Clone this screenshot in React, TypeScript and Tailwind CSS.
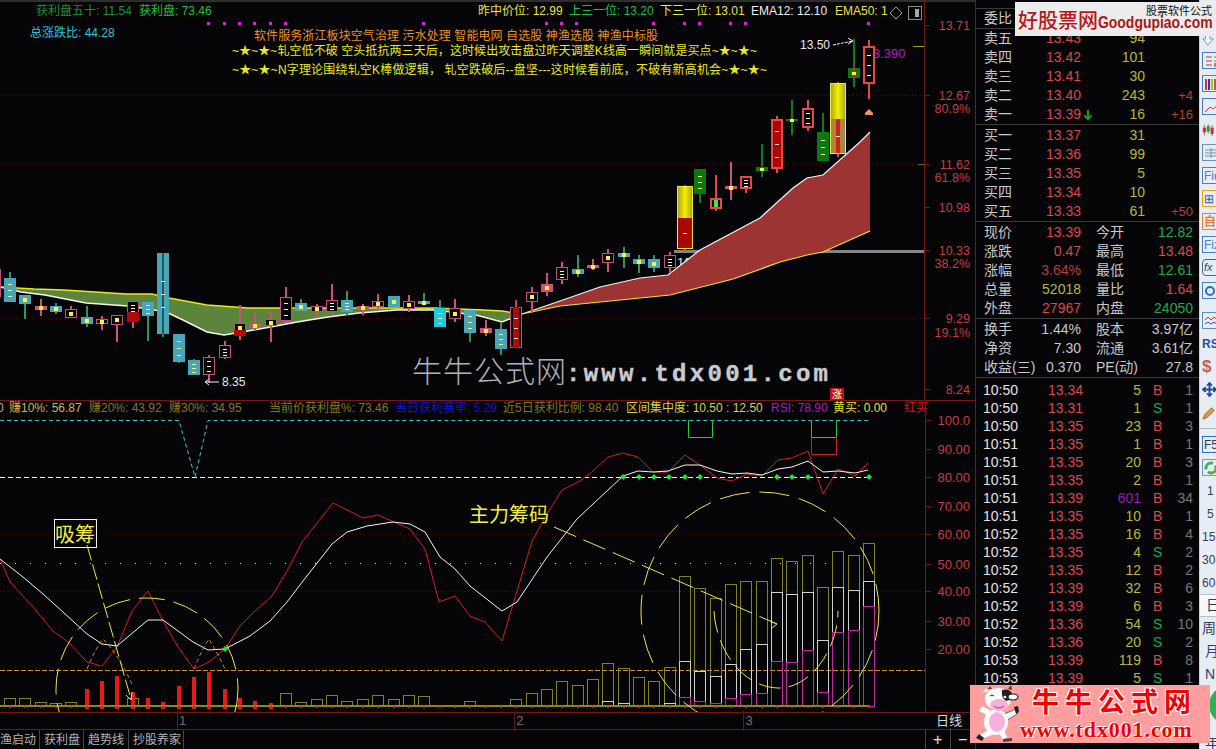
import React from "react";
import { Move } from "lucide-react";

type K = "teal" | "bright" | "hollow" | "red" | "redHollow" | "redHollow2" | "green" | "cross" | "gcross" | "pair";
const X = (i: number) => Math.round(10 + 15.34 * i);
// i, hi, top, bot, lo, kind
const candles: [number, number, number, number, number, K][] = [
  [-1, 269, 269, 297, 297, "hollow"],
  [0, 272, 278, 302, 302, "teal"],
  [1, 295, 295, 304, 319, "teal"],
  [2, 299, 306, 310, 316, "cross"],
  [3, 303, 306, 312, 314, "teal"],
  [4, 306, 309, 318, 318, "hollow"],
  [5, 306, 317, 324, 327, "teal"],
  [6, 316, 319, 324, 330, "hollow"],
  [7, 315, 315, 325, 342, "hollow"],
  [8, 301, 301, 322, 328, "pair"],
  [9, 299, 302, 316, 341, "teal"],
  [10, 253, 253, 334, 337, "teal"],
  [11, 334, 334, 362, 363, "teal"],
  [12, 359, 360, 375, 375, "teal"],
  [13, 355, 357, 375, 383, "hollow"],
  [14, 341, 345, 358, 359, "hollow"],
  [15, 305, 323, 336, 340, "pair"],
  [16, 313, 324, 328, 330, "cross"],
  [17, 311, 319, 326, 342, "hollow"],
  [18, 287, 297, 321, 323, "hollow"],
  [19, 299, 303, 311, 313, "teal"],
  [20, 304, 306, 312, 317, "hollow"],
  [21, 284, 300, 312, 314, "hollow"],
  [22, 291, 300, 312, 315, "teal"],
  [23, 304, 306, 309, 315, "cross"],
  [24, 294, 301, 307, 310, "hollow"],
  [25, 296, 296, 307, 307, "teal"],
  [26, 295, 301, 309, 312, "hollow"],
  [27, 293, 301, 304, 305, "teal"],
  [28, 300, 308, 327, 327, "bright"],
  [29, 299, 308, 319, 322, "hollow"],
  [30, 310, 310, 333, 342, "teal"],
  [31, 320, 328, 333, 336, "cross"],
  [32, 322, 329, 349, 355, "teal"],
  [33, 300, 307, 348, 348, "redHollow"],
  [34, 287, 292, 302, 313, "hollow"],
  [35, 273, 284, 292, 296, "cross"],
  [36, 262, 267, 280, 284, "hollow"],
  [37, 255, 269, 274, 277, "teal"],
  [38, 259, 265, 268, 270, "cross"],
  [39, 249, 253, 263, 272, "hollow"],
  [40, 247, 253, 257, 268, "teal"],
  [41, 255, 259, 264, 273, "teal"],
  [42, 255, 259, 268, 272, "teal"],
  [43, 252, 255, 268, 273, "hollow"],
  [45, 169, 169, 194, 203, "green"],
  [47, 162, 186, 189, 200, "cross"],
  [48, 176, 176, 189, 193, "redHollow2"],
  [49, 144, 167, 171, 177, "gcross"],
  [50, 116, 119, 169, 173, "red"],
  [51, 100, 119, 121, 135, "gcross"],
  [52, 100, 108, 128, 131, "redHollow2"],
  [53, 113, 132, 161, 161, "green"],
  [55, 39, 68, 78, 87, "gcross"],
  [56, 40, 46, 84, 99, "redHollow2"],
];

const marks = (x: number, t: number, b: number, color = "#f4f48a") => {
  const h = b - t;
  if (h < 12) return <rect x={x - 2} y={Math.round((t + b) / 2) - 2} width={4} height={4} fill="#f2f24a" />;
  const c = Math.round((t + b) / 2);
  const s = Math.round(Math.min(h / 4, 13));
  return (
    <g fill={color}>
      <rect x={x - 2} y={c - s} width={4} height={1} />
      <rect x={x - 2} y={c} width={4} height={1} />
      <rect x={x - 2} y={c + s} width={4} height={1} />
    </g>
  );
};

function Candle({ c }: { c: (typeof candles)[number] }) {
  const [i, hi, t, b, lo, kind] = c;
  const x = X(i);
  const k = kind as string;
  const w = 12;
  const l = x - w / 2;
  if (k === "teal" || k === "bright") {
    return (
      <g>
        <line x1={x} x2={x} y1={hi} y2={lo} stroke="#2f9460" strokeWidth={2} />
        <rect x={l} y={t} width={w} height={b - t} fill={k === "bright" ? "#25c8d8" : "#48a6b8"} />
        {i === 10 ? <rect x={x - 1} y={t} width={2} height={b - t} fill="#1f5a5a" /> : null}
        {marks(x, t, b)}
      </g>
    );
  }
  if (k === "hollow" || k === "cross") {
    const stroke = "#c04f7c";
    return (
      <g>
        <line x1={x} x2={x} y1={hi} y2={lo} stroke="#d05078" strokeWidth={2} />
        {k === "cross" ? (
          <rect x={l} y={t} width={w} height={Math.max(b - t, 3)} fill="#d05078" />
        ) : (
          <rect x={l + 0.5} y={t + 0.5} width={w - 1} height={b - t - 1} fill="#050508" stroke={stroke} />
        )}
        {marks(x, t, b, "#f6f6c8")}
      </g>
    );
  }
  if (k === "pair") {
    const mid = Math.round((t + b) / 2);
    return (
      <g>
        <line x1={x} x2={x} y1={hi} y2={lo} stroke="#d05078" strokeWidth={2} />
        <rect x={l + 0.5} y={t + 0.5} width={w - 1} height={mid - t} fill="#050508" stroke="#c04f7c" />
        <rect x={l} y={mid} width={w} height={b - mid} fill="#b40808" />
        {marks(x, t, mid + 2, "#f6f6c8")}
      </g>
    );
  }
  if (k === "redHollow") {
    return (
      <g>
        <line x1={x} x2={x} y1={hi} y2={lo} stroke="#d04060" strokeWidth={2} />
        <rect x={l + 0.5} y={t + 0.5} width={w - 1} height={b - t - 1} fill="#050508" stroke="#c04f7c" />
        <rect x={x - 3} y={t} width={6} height={b - t} fill="#b40808" />
        {marks(x, t, b, "#f0f0f0")}
      </g>
    );
  }
  if (k === "redHollow2") {
    return (
      <g>
        <line x1={x} x2={x} y1={hi} y2={lo} stroke="#e84848" strokeWidth={2} />
        <rect x={l + 1} y={t + 1} width={w - 2} height={b - t - 2} fill="#050508" stroke="#e84848" strokeWidth={2} />
        {marks(x, t, b, "#f6f6e0")}
      </g>
    );
  }
  if (k === "red") {
    return (
      <g>
        <line x1={x} x2={x} y1={hi} y2={lo} stroke="#e84848" strokeWidth={2} />
        <rect x={l + 1} y={t + 1} width={w - 2} height={b - t - 2} fill="#a80808" stroke="#e84848" strokeWidth={2} />
        {marks(x, t, b, "#f6f6e0")}
      </g>
    );
  }
  if (k === "green") {
    return (
      <g>
        <line x1={x} x2={x} y1={hi} y2={lo} stroke="#0f7a18" strokeWidth={2} />
        <rect x={l} y={t} width={w} height={b - t} fill="#0a7a10" />
        {marks(x, t, b)}
      </g>
    );
  }
  return (
    <g>
      <line x1={x} x2={x} y1={hi} y2={lo} stroke="#0f7a18" strokeWidth={2} />
      <rect x={l} y={t} width={w} height={b - t} fill="#0a7a10" />
      {i === 55 ? <rect x={x - 1.5} y={t} width={3} height={b - t} fill="#d02020" /> : null}
      <rect x={x - 2} y={Math.round((t + b) / 2) - 1} width={4} height={3} fill="#f0f060" />
    </g>
  );
}

function Gold({ i, top, mid, bot, tan }: { i: number; top: number; mid: number; bot: number; tan?: boolean }) {
  const x = X(i);
  return (
    <g>
      <line x1={x} x2={x} y1={top - 1} y2={bot + 4} stroke="#e84848" strokeWidth={2} />
      <rect x={x - 7} y={top} width={14} height={mid - top} fill="url(#goldY)" />
      <rect x={x - 7} y={mid} width={14} height={bot - mid} fill={tan ? "#a8883c" : "#a80808"} />
      {tan ? <rect x={x - 2} y={mid} width={4} height={bot - mid} fill="#d02010" /> : null}
      <rect x={x - 7.5} y={top + 0.5} width={15} height={bot - top} fill="none" stroke="#e8e840" />
      <rect x={x - 2} y={Math.round((mid + bot) / 2)} width={4} height={1} fill="#f0f0f0" />
    </g>
  );
}

const pts = (a: number[][]) => a.map((p) => p.join(",")).join(" ");
const yellowMA = [[0, 287], [34, 289], [64, 290], [95, 292], [126, 294], [152, 294], [169, 298], [207, 305], [248, 308], [310, 308], [397, 308], [434, 308], [483, 310], [502, 311], [522, 314]];
const whiteMA = [[0, 287], [21, 292], [45, 295], [86, 303], [128, 306], [148, 309], [166, 312], [183, 320], [207, 332], [224, 335], [248, 331], [276, 326], [297, 322], [328, 317], [359, 313], [397, 310], [434, 310], [476, 315], [502, 322], [522, 314]];
const whiteUp = [[522, 314], [560, 301], [600, 287], [640, 278], [668, 275], [700, 250], [760, 218], [793, 188], [807, 178], [823, 175], [860, 142], [870, 132]];
const yellowUp = [[870, 231], [823, 252], [807, 255], [780, 262], [733, 279], [670, 295], [640, 298], [560, 306], [522, 314]];

const redLine = [[0, 560], [10, 583], [33, 608], [53, 632], [68, 643], [87, 663], [102, 667], [117, 648], [132, 612], [148, 592], [163, 622], [178, 648], [194, 670], [209, 663], [225, 650], [240, 627], [255, 612], [272, 597], [287, 572], [302, 543], [318, 523], [333, 504], [363, 519], [378, 516], [410, 530], [425, 550], [439, 603], [455, 597], [470, 617], [485, 623], [502, 642], [517, 592], [532, 542], [547, 515], [562, 491], [580, 482], [593, 472], [608, 458], [623, 454], [638, 458], [653, 473], [668, 473], [685, 456], [700, 466], [717, 479], [732, 482], [747, 475], [762, 477], [778, 461], [792, 459], [808, 452], [823, 495], [838, 470], [855, 477], [868, 464]];
const whiteLine = [[0, 560], [23, 578], [43, 595], [63, 613], [87, 635], [102, 645], [117, 647], [148, 621], [163, 621], [193, 643], [208, 651], [225, 650], [250, 637], [270, 622], [287, 603], [303, 582], [332, 545], [347, 533], [367, 527], [393, 523], [410, 525], [425, 533], [440, 558], [455, 570], [470, 587], [502, 612], [517, 603], [547, 558], [577, 520], [593, 505], [623, 477], [638, 472], [653, 473], [668, 472], [685, 466], [700, 466], [717, 472], [732, 475], [747, 474], [762, 476], [778, 470], [792, 468], [808, 462], [823, 473], [838, 472], [855, 474], [868, 471]];

const olive: [number, number][] = [[0, 699], [1, 699], [2, 703], [3, 704], [4, 703], [8, 699], [18, 694], [19, 703], [20, 700], [21, 696], [22, 702], [23, 700], [24, 696], [25, 700], [26, 696], [27, 697], [30, 702], [33, 700], [34, 694], [35, 690], [36, 682], [37, 686], [38, 680], [39, 664], [40, 669], [41, 678], [42, 682], [43, 668], [44, 577], [45, 589], [46, 599], [47, 585], [48, 582], [49, 582], [50, 559], [51, 562], [52, 556], [53, 588], [54, 552], [55, 556], [56, 544]];
const whiteBars: [number, number][] = [[39, 702], [40, 704], [43, 704], [44, 662], [45, 672], [46, 677], [47, 665], [48, 650], [49, 645], [50, 593], [51, 595], [52, 593], [53, 641], [54, 588], [55, 591], [56, 582]];
const magBars: [number, number][] = [[44, 698], [45, 702], [46, 704], [47, 699], [48, 695], [49, 694], [50, 662], [51, 663], [52, 651], [53, 693], [54, 633], [55, 631], [56, 607]];
const redBars: [number, number][] = [[5, 690], [6, 682], [7, 677], [8, 693], [9, 699], [10, 703], [11, 687], [12, 678], [13, 673], [14, 690], [15, 699], [16, 702], [17, 704]];

const diamonds = [[623, 478], [639, 478], [654, 478], [669, 478], [685, 478], [700, 478], [777, 478], [792, 478], [808, 478], [869, 478], [225, 650]];
const purpleDots = [208, 224, 239, 254, 270, 285, 423, 546, 561, 576, 653, 684, 699, 730, 745, 868];
const axisTop: [string, number][] = [["13.71", 25], ["12.67", 95], ["80.9%", 108], ["11.62", 164], ["61.8%", 177], ["10.98", 207], ["10.33", 250], ["38.2%", 263], ["9.29", 318], ["19.1%", 332], ["8.24", 389]];
const axisLow: [string, number][] = [["100.0", 421], ["90.00", 450], ["80.00", 478], ["70.00", 507], ["60.00", 535], ["50.00", 565], ["40.00", 592], ["30.00", 622], ["20.00", 650]];

function T({ x, y, c, s = 12, w, children }: { x: number; y: number; c: string; s?: number; w?: number; children: React.ReactNode }) {
  return (
    <text x={x} y={y} fill={c} fontSize={s} textLength={w} lengthAdjust={w ? "spacing" : undefined}>
      {children}
    </text>
  );
}

function UpperChart() {
  return (
    <svg width={975} height={400} viewBox="0 0 975 400" className="block">
      <defs>
        <linearGradient id="goldY" x1="0" x2="1" y1="0" y2="0">
          <stop offset="0" stopColor="#b0a818" />
          <stop offset="0.5" stopColor="#f4f000" />
          <stop offset="1" stopColor="#b0a818" />
        </linearGradient>
      </defs>
      {[95, 164, 318].map((y) => (
        <line key={y} x1={0} x2={924} y1={y + 0.5} y2={y + 0.5} stroke="#4a1010" strokeDasharray="1 3" />
      ))}
      <rect x={674} y={250} width={250} height={3} fill="#858585" />
      <T x={677} y={267} c="#e8e8e8" s={13}>10</T>
      <polygon points={pts([...yellowMA, ...[...whiteMA].reverse()])} fill="#5c843a" />
      <polygon points={pts([...whiteUp, ...yellowUp])} fill="#9c3434" />
      <polyline points={pts(yellowMA)} fill="none" stroke="#e8e820" strokeWidth={1.5} />
      <polyline points={pts(whiteMA)} fill="none" stroke="#f4f4f4" strokeWidth={1.5} />
      <polyline points={pts(whiteUp)} fill="none" stroke="#f4f4f4" strokeWidth={1.2} />
      <polyline points={pts(yellowUp)} fill="none" stroke="#e8e820" strokeWidth={1.2} />
      <text x={873} y={58} fill="#b020c0" fontSize={13}>3.390</text>
      {candles.map((c) => (
        <Candle key={c[0]} c={c} />
      ))}
      <Gold i={44} top={186} mid={218} bot={248} />
      <Gold i={54} top={83} mid={119} bot={153} tan />
      {/* small candle with green core */}
      <line x1={716} x2={716} y1={175} y2={211} stroke="#e84848" strokeWidth={2} />
      <rect x={711} y={199} width={10} height={9} fill="#050508" stroke="#e84848" strokeWidth={2} />
      <rect x={714} y={200} width={4} height={7} fill="#50e040" />
      <polygon points="865,115 865,113 869,109 873,113 873,115" fill="#f09060" />

      <T x={36} y={15} c="#1f8f38">获利盘五十: 11.54</T>
      <T x={139} y={15} c="#22c030">获利盘: 73.46</T>
      <T x={478} y={15} c="#e4e44c">昨中价位: 12.99</T>
      <T x={569} y={15} c="#20c040">上三一位: 13.20</T>
      <T x={660} y={15} c="#e4e44c">下三一位: 13.01</T>
      <T x={751} y={15} c="#f0f0f0">EMA12: 12.10</T>
      <T x={835} y={15} c="#e4e44c">EMA50: 1</T>
      <polygon points="896,7 902,13 896,19 890,13" fill="none" stroke="#9a9a9a" />
      <rect x={908.5} y={6.5} width={13} height={13} fill="none" stroke="#8a8a8a" />
      <rect x={915} y={9} width={4} height={8} fill="#a8a8a8" />
      <T x={30} y={37} c="#25c8d8">总涨跌比: 44.28</T>
      {purpleDots.map((x) => (
        <rect key={x} x={x - 1} y={22} width={3} height={3} fill="#e020d8" />
      ))}
      <T x={254} y={40} c="#e8902a" w={404}>软件服务浙江板块空气治理 污水处理 智能电网 自选股 神渔选股 神渔中标股</T>
      <T x={232} y={55} c="#e8e820" w={525}>~★~★~轧空低不破 空头抵抗两三天后，这时候出攻击盘过昨天调整K线高一瞬间就是买点~★~★~</T>
      <T x={232} y={74} c="#e8e820" w={535}>~★~★~N字理论围绕轧空K棒做逻辑， 轧空跌破后--盘坚---这时候看前底，不破有新高机会~★~★~</T>

      <T x={800} y={49} c="#e8e8f0">13.50</T>
      <polyline points="833,45 853,41" fill="none" stroke="#f0f0f0" strokeDasharray="3 1" />
      <polyline points="848,38 853,41 848,44" fill="none" stroke="#f0f0f0" />
      <line x1={913} x2={924} y1={46.5} y2={46.5} stroke="#88a820" />
      <line x1={918} x2={924} y1={164.5} y2={164.5} stroke="#208040" />

      <polyline points="205,382 219,382" fill="none" stroke="#f0f0f0" />
      <polyline points="209,379 205,382 209,385" fill="none" stroke="#f0f0f0" />
      <T x={222} y={386} c="#e8e8e8">8.35</T>

      <text x={412} y={382} fill="#aeb2b8" fontSize={30} fontWeight={300} textLength={154} lengthAdjust="spacing">牛牛公式网</text>
      <text x={566} y={381} fill="#c8ccd0" stroke="#c8ccd0" strokeWidth={0.4} fontSize={24} fontWeight={700} textLength={262} lengthAdjust="spacing" style={{ fontFamily: "'Liberation Mono',monospace" }}>:www.tdx001.com</text>
      <rect x={830} y={388} width={14} height={12} fill="#b01818" />
      <T x={832} y={398} c="#ffffff" s={10}>涨</T>

      <line x1={924.5} x2={924.5} y1={0} y2={400} stroke="#7a1515" />
      {axisTop.filter((a) => !a[0].includes("%")).map(([, y]) => (
        <line key={y} x1={924} x2={930} y1={y + 0.5} y2={y + 0.5} stroke="#7a1515" />
      ))}
      {axisTop.map(([t, y]) => (
        <text key={t} x={970} y={y + 5} textAnchor="end" fill="#c83c3c" fontSize={12.5}>{t}</text>
      ))}
    </svg>
  );
}

function LowerChart() {
  return (
    <svg width={975} height={313} viewBox="0 401 975 313" className="block">
      <line x1={0} x2={975} y1={401.5} y2={401.5} stroke="#7a1515" />
      <T x={-3} y={413} c="#c8b850">0</T>
      <T x={9} y={413} c="#c8b850">赚10%: 56.87</T>
      <T x={89} y={413} c="#807820">赚20%: 43.92</T>
      <T x={169} y={413} c="#807820">赚30%: 34.95</T>
      <T x={269} y={413} c="#807820">当前价获利盘%: 73.46</T>
      <T x={395} y={413} c="#1414c8">当日获利赛率: 5.29</T>
      <T x={503} y={413} c="#807820">近5日获利比例: 98.40</T>
      <T x={626} y={413} c="#d8d040">区间集中度: 10.50 : 12.50</T>
      <T x={771} y={413} c="#a020c0">RSI: 78.90</T>
      <T x={833} y={413} c="#e0e040">黄买: 0.00</T>
      <T x={904} y={413} c="#c81818">红买</T>

      {[535, 592].map((y) => (
        <line key={y} x1={0} x2={925} y1={y + 0.5} y2={y + 0.5} stroke="#4a1010" strokeDasharray="1 3" />
      ))}
      <polyline points="0,421.5 179,421.5 195,478 208,421.5 870,421.5" fill="none" stroke="#40c8c8" strokeDasharray="4 3" />
      <line x1={0} x2={870} y1={478.5} y2={478.5} stroke="#f4f4f4" strokeDasharray="5 3" />
      <line x1={0} x2={830} y1={564.5} y2={564.5} stroke="#e0e0e0" strokeDasharray="1 14" />
      <line x1={0} x2={925} y1={671.5} y2={671.5} stroke="#c89028" strokeDasharray="5 2" />

      <polyline points="688.5,421 688.5,438.5 712.5,438.5 712.5,421" fill="none" stroke="#30c040" />
      <polyline points="811.5,421 811.5,438.5 836.5,438.5 836.5,421" fill="none" stroke="#30c040" />
      <polyline points="811.5,438 811.5,455.5 836.5,455.5 836.5,438" fill="none" stroke="#d02020" />

      {olive.map(([i, y]) => (
        <rect key={i} x={X(i) - 5.5} y={y + 0.5} width={11} height={707 - y} fill="none" stroke="#808028" />
      ))}
      {whiteBars.map(([i, y]) => (
        <rect key={i} x={X(i) - 5.5} y={y + 0.5} width={11} height={707 - y} fill="none" stroke="#d0d0d0" />
      ))}
      {magBars.map(([i, y]) => (
        <rect key={i} x={X(i) - 5.5} y={y + 0.5} width={11} height={707 - y} fill="none" stroke="#c028a0" />
      ))}
      {redBars.map(([i, y]) => (
        <rect key={i} x={X(i) - 2} y={y} width={4} height={710 - y} fill="#e81818" />
      ))}
      <line x1={0} x2={870} y1={707} y2={707} stroke="#8a8a10" strokeWidth={2} />
      {Array.from({ length: 57 }, (_, i) => (
        <rect key={i} x={X(i) - 1} y={707} width={2} height={2} fill="#d02020" />
      ))}

      <polyline points={pts(redLine)} fill="none" stroke="#d81c1c" />
      <polyline points={pts(whiteLine)} fill="none" stroke="#f4f4f4" />
      {diamonds.map(([x, y]) => (
        <polygon key={x} points={`${x},${y - 3} ${x + 3},${y} ${x},${y + 3} ${x - 3},${y}`} fill="#20e040" />
      ))}

      <circle cx={147} cy={690} r={91} fill="none" stroke="#e8e840" strokeDasharray="26 9" />
      <circle cx={760} cy={612} r={119} fill="none" stroke="#e8e840" strokeDasharray="30 10" />
      <path d="M714 612 C716 650 742 688 778 689 C810 690 838 650 838 612" fill="none" stroke="#e8e840" strokeDasharray="22 8" />
      <path d="M87 670 Q95 650 103 640 Q118 655 132 685" fill="none" stroke="#c89028" strokeDasharray="4 3" />
      <path d="M194 670 Q202 650 209 640 Q218 655 226 672" fill="none" stroke="#c89028" strokeDasharray="4 3" />
      <line x1={87} x2={131} y1={546} y2={700} stroke="#e8e840" strokeDasharray="16 4" />
      <polyline points="126,696 131,701 132,693" fill="none" stroke="#e8e840" />
      <line x1={554} x2={777} y1={528} y2={625} stroke="#e8e840" strokeDasharray="24 8" />
      <polyline points="770,622 777,625 772,629" fill="none" stroke="#e8e840" />

      <rect x={54.5} y={520.5} width={42} height={28} fill="#050508" fillOpacity={0.1} stroke="#f0f0f0" />
      <T x={55} y={543} c="#f0f040" s={20}>吸筹</T>
      <T x={469} y={523} c="#f0f040" s={20}>主力筹码</T>

      <line x1={925.5} x2={925.5} y1={401} y2={713} stroke="#7a1515" />
      {axisLow.map(([, y]) => (
        <line key={y} x1={925} x2={931} y1={y + 0.5} y2={y + 0.5} stroke="#7a1515" />
      ))}
      {axisLow.map(([t, y]) => (
        <text key={t} x={970} y={y + 5} textAnchor="end" fill="#c83c3c" fontSize={13}>{t}</text>
      ))}
      <line x1={0} x2={975} y1={713.5} y2={713.5} stroke="#7a1515" />
    </svg>
  );
}

const red = "text-[#d84a4a]";
const yel = "text-[#b8b838]";
const grn = "text-[#22a84c]";
const gry = "text-[#c8c8c8]";

function Book({ label, price, qty, diff, arrow }: { label: string; price: string; qty: string; diff?: string; arrow?: boolean }) {
  return (
    <div className="flex h-[19px] items-center pl-[8px]">
      <span className={`w-[50px] ${gry}`}>{label}</span>
      <span className={`w-[47px] text-right ${red}`}>{price}</span>
      <span className="w-[14px] pl-[2px]">
        {arrow ? (
          <svg width={10} height={12} viewBox="0 0 10 12">
            <path d="M5 1v9M1.5 6.5 5 10l3.5-3.5" stroke="#1a9a30" strokeWidth={2} fill="none" />
          </svg>
        ) : null}
      </span>
      <span className={`w-[50px] text-right ${yel}`}>{qty}</span>
      <span className={`w-[48px] text-right text-[13px] text-[#b83c3c]`}>{diff}</span>
    </div>
  );
}

function Stat({ a, av, ac, b, bv, bc }: { a: string; av: string; ac: string; b: string; bv: string; bc: string }) {
  return (
    <div className="flex h-[19px] items-center pl-[8px] whitespace-nowrap">
      <span className={`w-[50px] ${gry}`}>{a}</span>
      <span className={`w-[47px] text-right ${ac}`}>{av}</span>
      <span className={`ml-[15px] w-[40px] ${gry}`}>{b}</span>
      <span className={`w-[57px] text-right ${bc}`}>{bv}</span>
    </div>
  );
}

const ticks: [string, string, string, string, string][] = [
  ["10:50", "13.34", "5", "B", "1"], ["10:50", "13.31", "1", "S", "1"], ["10:50", "13.35", "23", "B", "3"], ["10:51", "13.35", "1", "B", "1"],
  ["10:51", "13.35", "20", "B", "3"], ["10:51", "13.35", "2", "B", "1"], ["10:51", "13.39", "601", "B", "34"], ["10:51", "13.35", "10", "B", "1"],
  ["10:52", "13.35", "16", "B", "4"], ["10:52", "13.35", "4", "S", "2"], ["10:52", "13.35", "12", "B", "2"], ["10:52", "13.39", "32", "B", "6"],
  ["10:52", "13.39", "6", "B", "3"], ["10:52", "13.36", "54", "S", "10"], ["10:52", "13.36", "20", "S", "2"], ["10:53", "13.39", "119", "B", "8"],
  ["10:53", "13.39", "5", "S", "1"],
];

function QuotePanel() {
  const hr = "h-px bg-[#3a3a3a]";
  return (
    <div className="w-[224px] h-[749px] border-l border-[#7a1515] text-[14px] overflow-hidden">
      <div className="h-[8px]" />
      <div className={hr} />
      <div className="flex h-[19px] items-center pl-[8px]"><span className={gry}>委比</span></div>
      <div className={hr} />
      <Book label="卖五" price="13.43" qty="94" />
      <Book label="卖四" price="13.42" qty="101" />
      <Book label="卖三" price="13.41" qty="30" />
      <Book label="卖二" price="13.40" qty="243" diff="+4" />
      <Book label="卖一" price="13.39" qty="16" diff="+16" arrow />
      <div className={`${hr} mb-[1px]`} />
      <Book label="买一" price="13.37" qty="31" />
      <Book label="买二" price="13.36" qty="99" />
      <Book label="买三" price="13.35" qty="5" />
      <Book label="买四" price="13.34" qty="10" />
      <Book label="买五" price="13.33" qty="61" diff="+50" />
      <div className={`${hr} mb-[1px]`} />
      <Stat a="现价" av="13.39" ac={red} b="今开" bv="12.82" bc={grn} />
      <Stat a="涨跌" av="0.47" ac={red} b="最高" bv="13.48" bc={red} />
      <Stat a="涨幅" av="3.64%" ac="text-[#b83c3c]" b="最低" bv="12.61" bc={grn} />
      <Stat a="总量" av="52018" ac={yel} b="量比" bv="1.64" bc={red} />
      <Stat a="外盘" av="27967" ac={red} b="内盘" bv="24050" bc={grn} />
      <div className={`${hr} mb-[1px]`} />
      <Stat a="换手" av="1.44%" ac={gry} b="股本" bv="3.97亿" bc={gry} />
      <Stat a="净资" av="7.30" ac={gry} b="流通" bv="3.61亿" bc={gry} />
      <Stat a="收益(三)" av="0.370" ac={gry} b="PE(动)" bv="27.8" bc={gry} />
      <div className={`${hr} mb-[3px]`} />
      {ticks.map((t, i) => (
        <div key={i} className="flex h-[18px] items-center pl-[7px]">
          <span className="w-[45px] text-[#e4e4e4]">{t[0]}</span>
          <span className={`w-[55px] text-right ${red}`}>{t[1]}</span>
          <span className={`w-[58px] text-right ${t[2] === "601" ? "text-[#9a1ca8]" : yel}`}>{t[2]}</span>
          <span className={`ml-[12px] w-[10px] ${t[3] === "B" ? "text-[#d84a4a]" : "text-[#22a84c]"}`}>{t[3]}</span>
          <span className="w-[30px] text-right text-[#787878]">{t[4]}</span>
        </div>
      ))}
    </div>
  );
}

const Box = ({ children, c = "#4a80c0" }: { children?: React.ReactNode; c?: string }) => (
  <span className="flex h-[17px] w-[26px] shrink-0 items-center overflow-hidden border pl-[1px] text-[12px] leading-none" style={{ borderColor: c, color: c }}>
    {children}
  </span>
);

function Tool({ children }: { children: React.ReactNode }) {
  return <div className="flex h-[23px] items-center pl-[2px]">{children}</div>;
}

function Toolbar() {
  const txt = "text-[12px] text-[#304060]";
  return (
    <div className="w-[17px] h-[749px] bg-[#e6edf4] overflow-hidden border-l border-[#c8d0d8] pt-[26px]">
      <Tool>
        <svg width={16} height={18} viewBox="0 0 16 18"><path d="M4 1h5v9h4l-6.5 7L1 10h3z" fill="#f4f8fc" stroke="#5a8ac0" /></svg>
      </Tool>
      <Tool>
        <Box>
          <svg width={22} height={14} viewBox="0 0 22 14"><path d="M2 3h6M2 7h6M2 11h6" stroke="#d03030" /><path d="M10 3h4M10 7h3" stroke="#30a040" /><rect x={10} y={9} width={4} height={4} fill="#909090" /></svg>
        </Box>
      </Tool>
      <Tool>
        <Box>
          <svg width={22} height={14} viewBox="0 0 22 14"><path d="M2 2v11" stroke="#d03030" strokeWidth={2} /><path d="M5 2v11" stroke="#3030d0" strokeWidth={2} /><path d="M8 2v11" stroke="#e0a020" strokeWidth={2} /><path d="M11 2v11" stroke="#30a040" strokeWidth={2} /><path d="M14 2v11" stroke="#d03030" strokeWidth={2} /></svg>
        </Box>
      </Tool>
      <Tool>
        <Box>
          <svg width={22} height={14} viewBox="0 0 22 14"><path d="M1 12l5-5 3 2 6-5" fill="none" stroke="#d03030" /></svg>
        </Box>
      </Tool>
      <Tool>
        <svg width={18} height={18} viewBox="0 0 18 18"><path d="M3 2v14" stroke="#d03030" /><rect x={1} y={6} width={4} height={6} fill="#d03030" /><path d="M8 1v13" stroke="#30a040" /><rect x={6} y={4} width={4} height={7} fill="#20a040" /><path d="M13 3v14" stroke="#d03030" /><rect x={11} y={6} width={4} height={8} fill="#d03030" /></svg>
      </Tool>
      <Tool>
        <Box c="#7090b8">
          <svg width={22} height={12} viewBox="0 0 22 12"><path d="M1 3h20M1 6h20M1 9h20M7 1v10M14 1v10" stroke="#7090b8" /></svg>
        </Box>
      </Tool>
      <Tool><Box>Fid</Box></Tool>
      <Tool>
        <Box c="#e0a020"><span className="text-[#3060a0]">⊞</span></Box>
      </Tool>
      <Tool><Box c="#e08030"><span className="font-bold">自</span></Box></Tool>
      <Tool><Box>Fiz</Box></Tool>
      <Tool>
        <span className="flex h-[17px] w-[26px] shrink-0 items-center rounded-[4px] border border-[#406890] pl-[1px] text-[11px] italic text-[#304868]">fx</span>
      </Tool>
      <Tool><Box c="#4a80c0"><span className="ml-[1px] inline-block h-[10px] w-[10px] rounded-full border-2 border-[#2a70b0]" /></Box></Tool>
      <div className="mt-[7px]" />
      <Tool>
        <Box c="#5a90c8">
          <svg width={22} height={12} viewBox="0 0 22 12"><path d="M1 5l3-3 3 3 3-3 3 3 3-3" fill="none" stroke="#d03030" /><path d="M1 9l3-2 3 2 3-2 3 2 3-2" fill="none" stroke="#3050c0" /></svg>
        </Box>
      </Tool>
      <Tool><span className="text-[12px] font-bold text-[#2850a0]">RS</span></Tool>
      <Tool><span className="text-[17px] font-bold text-[#c06060] leading-none">$</span></Tool>
      <Tool><Move size={15} className="text-[#1a4aa8] shrink-0" strokeWidth={3} /></Tool>
      <Tool>
        <svg width={16} height={16} viewBox="0 0 16 16"><path d="M1 15l2-5 8-8 3 3-8 8z" fill="#e0a040" stroke="#806030" /></svg>
      </Tool>
      <div className="mt-[4px] h-px bg-[#a8b0b8]" />
      <div className="mt-[4px]" />
      <Tool><Box c="#3070b8"><span className="text-[#303a50]">F5</span></Box></Tool>
      <Tool>
        <Box c="#60a0d0">
          <svg width={14} height={14} viewBox="0 0 14 14"><circle cx={7} cy={7} r={5} fill="none" stroke="#50b050" strokeWidth={3} strokeDasharray="11 3" /></svg>
        </Box>
      </Tool>
      {["1", "5", "15", "30", "60"].map((t) => (
        <Tool key={t}><span className={`${txt} whitespace-nowrap ${t.length === 1 ? "pl-[5px]" : ""}`}>{t}</span></Tool>
      ))}
      <div className="flex h-[23px] items-center border border-r-0 border-[#b8c0c8] bg-[#f6f8fa] pl-[6px] text-[14px] text-[#303a50] -ml-[1px]">日</div>
      {["周", "月", "N"].map((t) => (
        <Tool key={t}><span className={`${txt} text-[14px] ${t !== "周" ? "pl-[3px]" : ""}`}>{t}</span></Tool>
      ))}
      <div className="h-[46px]" />
      <Tool><span className={`${txt} text-[14px] pl-[3px]`}>年</span></Tool>
    </div>
  );
}

function Tabs() {
  return (
    <div className="flex h-[20px] items-center text-[12px] text-[#b4b4b4] border-t border-[#333]">
      <div className="flex w-[40px] h-full items-center border-r border-[#444]">渔启动</div>
      <div className="flex w-[44px] h-full items-center border-r border-[#444] pl-[4px]">获利盘</div>
      <div className="flex w-[45px] h-full items-center border-r border-[#444] pl-[4px]">趋势线</div>
      <div className="flex w-[55px] h-full items-center border-r border-[#444] pl-[4px]">抄股养家</div>
      <div className="ml-auto flex h-full w-[50px] items-center border-l border-[#444] text-[16px] text-[#e0e0e0]">
        <span className="w-[25px] border-r border-[#444] text-center">+</span>
        <span className="w-[25px] text-center">−</span>
      </div>
    </div>
  );
}

function Cow() {
  return (
    <svg width={44} height={58} viewBox="0 0 44 58" className="shrink-0">
      <path d="M26 30 L40 24 L41 29 L28 37z" fill="#fff" stroke="#222" strokeWidth={0.6} />
      <path d="M38 22 l4 -1 1 6 -3 2z" fill="#222" />
      <path d="M12 31 L3 26 L6 21 L14 25z" fill="#fff" stroke="#bbb" strokeWidth={0.6} />
      <ellipse cx={20} cy={37} rx={12} ry={13} fill="#fff" />
      <ellipse cx={21} cy={37} rx={8} ry={10} fill="#f8b0d8" />
      <path d="M14 44 L4 50 L6 54 L18 49z" fill="#fff" />
      <path d="M3 49 l5 4 -2 3 -6 -3z" fill="#222" />
      <path d="M22 46 L27 55 L31 52 L28 45z" fill="#fff" />
      <path d="M27 54 l9 -1 0 3 -9 1z" fill="#444" />
      <path d="M6 8 l4 -5 3 3z" fill="#fff" stroke="#bbb" strokeWidth={0.5} />
      <path d="M32 4 l3 -4 1 5z" fill="#5a3a10" />
      <path d="M12 4 l2 -3 2 3z" fill="#5a3a10" />
      <ellipse cx={22} cy={14} rx={13} ry={11} fill="#fff" />
      <path d="M26 5 q8 -2 10 4 q1 6 -6 7 q-5 -3 -4 -11z" fill="#222" />
      <ellipse cx={37} cy={12} rx={5} ry={3} fill="#fff" stroke="#222" strokeWidth={1.2} />
      <ellipse cx={23} cy={20} rx={9} ry={6} fill="#f8b0d8" />
      <path d="M14 11 q2 -2 4 0" stroke="#222" fill="none" />
      <circle cx={29} cy={12} r={1.3} fill="#fff" />
      <path d="M18 21 q5 4 10 0" stroke="#a04060" fill="none" />
    </svg>
  );
}

export default function App() {
  return (
    <div className="relative flex w-[1216px] h-[749px] overflow-hidden bg-[#050508] font-['Liberation_Sans','Noto_Sans_CJK_SC',sans-serif]">
      <div className="flex w-[975px] shrink-0 flex-col">
        <div className="h-[2px] bg-[#2e2e2e] shrink-0" />
        <div className="-mt-[2px]"><UpperChart /></div>
        <LowerChart />
        <div className="relative h-[16px] text-[13px] text-[#707070]">
          <div className="flex h-full items-center">
            <span className="ml-[177px] border-l border-[#5a1a1a] pl-[1px]">1</span>
            <span className="ml-[328px] border-l border-[#5a1a1a] pl-[1px]">2</span>
            <span className="ml-[220px] border-l border-[#5a1a1a] pl-[1px]">3</span>
            <span className="ml-auto mr-[13px] text-[#d8d8d8]">日线</span>
          </div>
        </div>
        <Tabs />
      </div>
      <QuotePanel />
      <Toolbar />

      {/* top-right site badge */}
      <div className="absolute left-[1015px] top-[2px] h-[34px] w-[198px] bg-[#ececec]">
        <div className="absolute right-[1px] top-[2px] text-[11px] text-[#111] leading-[14px]">股票软件公式</div>
        <div className="absolute left-[3px] top-[6px] flex items-end leading-[26px] whitespace-nowrap">
          <span className="text-[20px] font-medium text-[#b8161c]">好股票网</span>
          <span className="inline-block origin-left scale-x-[0.82] text-[17px] font-bold text-[#a81818] leading-[22px]">Goodgupiao.com</span>
        </div>
      </div>

      {/* green round button peeking behind the logo */}
      <div className="absolute left-[1209px] top-[686px] h-[38px] w-[38px] rounded-full bg-[#30b050]" />

      {/* bottom-right logo */}
      <div className="absolute left-[970px] top-[685px] flex h-[58px] w-[240px] items-center bg-[#ff9e9e] pl-[6px]">
        <Cow />
        <div className="flex flex-col">
          <div className="whitespace-nowrap pl-[12px] text-[27px] font-bold leading-[31px] tracking-[6px] text-[#f00000] [text-shadow:1px_1px_0_#fff,-1px_-1px_0_#fff,1px_-1px_0_#fff,-1px_1px_0_#fff]">牛牛公式网</div>
          <div className="whitespace-nowrap font-['Liberation_Serif',serif] text-[22px] font-bold leading-[22px] tracking-[0.9px] text-[#f00000] [text-shadow:1px_1px_0_#fff,-1px_-1px_0_#fff]">www.tdx001.com</div>
        </div>
      </div>
    </div>
  );
}
